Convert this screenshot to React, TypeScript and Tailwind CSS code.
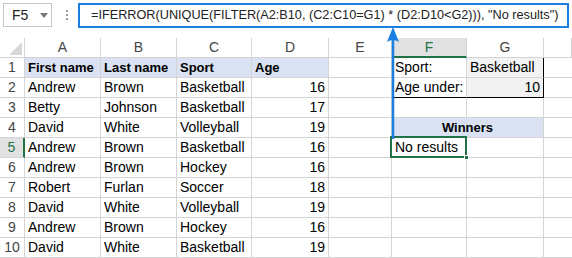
import React from "react";

const cols = ["A", "B", "C", "D", "E", "F", "G", ""];

type Row = [string, string, string, string];

const data: Row[] = [
  ["Andrew", "Brown", "Basketball", "16"],
  ["Betty", "Johnson", "Basketball", "17"],
  ["David", "White", "Volleyball", "19"],
  ["Andrew", "Brown", "Basketball", "16"],
  ["Andrew", "Brown", "Hockey", "16"],
  ["Robert", "Furlan", "Soccer", "18"],
  ["David", "White", "Volleyball", "19"],
  ["Andrew", "Brown", "Hockey", "16"],
  ["David", "White", "Basketball", "19"],
];

const cell = "h-[20px] border-r border-b border-[#d4d4d4] flex items-center px-[3px] whitespace-nowrap";
const head = "h-[20px] border-r border-b border-[#d4d4d4] flex items-center justify-center text-[#444]";
const bold = "bg-[#d9e1f2] font-bold text-[13px]";

function RowNum({ n, active }: { n: number; active?: boolean }) {
  return (
    <div
      className={
        active
          ? "h-[20px] border-b border-[#d4d4d4] border-r-2 border-r-[#217346] bg-[#e1e1e1] flex items-center justify-center text-[#217346]"
          : "h-[20px] border-r border-b border-[#d4d4d4] flex items-center justify-center text-[#444]"
      }
    >
      {n}
    </div>
  );
}

export default function App() {
  return (
    <div className="relative w-[572px] h-[258px] overflow-hidden bg-white font-['Liberation_Sans',Arial,sans-serif] text-[14px] text-black">
      {/* formula bar */}
      <div className="h-[38px] flex items-start pt-[3px] pl-[3px]">
        <div className="w-[49px] h-[24px] border border-[#c6c6c6] flex items-center pl-[8px] text-[#222]">
          F5
          <span className="ml-[12px] w-0 h-0 border-l-[4px] border-r-[4px] border-t-[5px] border-l-transparent border-r-transparent border-t-[#777]" />
        </div>
        <div className="ml-[14px] mt-[7px] flex flex-col gap-[2px]">
          <span className="w-[2px] h-[2px] bg-[#999]" />
          <span className="w-[2px] h-[2px] bg-[#999]" />
          <span className="w-[2px] h-[2px] bg-[#999]" />
        </div>
        <div className="ml-[10px] w-[491px] h-[25px] border-2 border-[#1a7fe0] flex items-center pl-[11px] text-[12.7px] text-[#222] whitespace-nowrap">
          =IFERROR(UNIQUE(FILTER(A2:B10, (C2:C10=G1) * (D2:D10&lt;G2))), "No results")
        </div>
      </div>

      {/* sheet */}
      <div className="grid grid-cols-[25px_76px_76px_75px_77px_63px_75px_77px_1fr]">
        <div className="h-[20px] border-r border-b border-[#d4d4d4] flex items-end justify-end pr-[2px] pb-[2px]">
          <svg width="13" height="13" viewBox="0 0 13 13">
            <polygon points="13,0 13,13 0,13" fill="#d8d8d8" />
          </svg>
        </div>
        {cols.map((c, i) =>
          c === "F" ? (
            <div key={i} className="h-[20px] border-r border-[#d4d4d4] border-b-2 border-b-[#217346] bg-[#e1e1e1] flex items-center justify-center text-[#217346]">
              F
            </div>
          ) : (
            <div key={i} className={head}>
              {c}
            </div>
          )
        )}

        {/* row 1 */}
        <RowNum n={1} />
        <div className={`${cell} ${bold}`}>First name</div>
        <div className={`${cell} ${bold}`}>Last name</div>
        <div className={`${cell} ${bold}`}>Sport</div>
        <div className={`${cell} ${bold}`}>Age</div>
        <div className={cell} />
        <div className={cell}>Sport:</div>
        <div className="h-[20px] border-b border-[#d4d4d4] border-r border-r-black bg-[#f2f2f2] flex items-center px-[3px]">Basketball</div>
        <div className="h-[20px] border-b border-[#d4d4d4]" />

        {data.map((r, i) => {
          const n = i + 2;
          return (
            <React.Fragment key={n}>
              <RowNum n={n} active={n === 5} />
              <div className={cell}>{r[0]}</div>
              <div className={cell}>{r[1]}</div>
              <div className={cell}>{r[2]}</div>
              <div className={`${cell} justify-end`}>{r[3]}</div>
              <div className={cell} />
              {n === 2 && (
                <>
                  <div className="h-[20px] border-r border-[#d4d4d4] border-b border-b-black flex items-center px-[3px] whitespace-nowrap">Age under:</div>
                  <div className="h-[20px] border-b border-b-black border-r border-r-black bg-[#f2f2f2] flex items-center justify-end px-[3px]">10</div>
                </>
              )}
              {n === 4 && (
                <div className={`col-span-2 h-[20px] border-r border-b border-[#d4d4d4] flex items-center justify-center ${bold}`}>
                  Winners
                </div>
              )}
              {n === 5 && (
                <>
                  <div className={`${cell} relative`}>
                    No results
                    <div className="absolute -left-[2px] -top-[2px] -right-[1px] -bottom-[1px] border-2 border-[#217346]" />
                    <div className="absolute -right-[3px] -bottom-[3px] w-[5px] h-[5px] bg-[#217346] border border-white" />
                  </div>
                  <div className={cell} />
                </>
              )}
              {n !== 2 && n !== 4 && n !== 5 && (
                <>
                  <div className={cell} />
                  <div className={cell} />
                </>
              )}
              <div className="h-[20px] border-b border-[#d4d4d4]" />
            </React.Fragment>
          );
        })}
      </div>

      {/* arrow from selected cell to formula bar */}
      <svg className="absolute left-[386px] top-[27px]" width="14" height="112" viewBox="0 0 14 112">
        <line x1="7" y1="10" x2="7" y2="112" stroke="#1a7fe0" strokeWidth="2.5" />
        <path d="M7 0 L13 15 Q7 11 1 15 Z" fill="#1a7fe0" />
      </svg>
    </div>
  );
}
